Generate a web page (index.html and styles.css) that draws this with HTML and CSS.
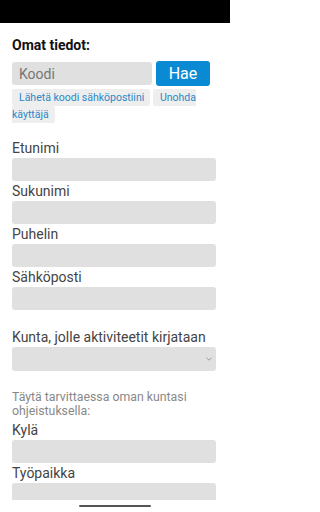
FILE: index.html
```html
<!DOCTYPE html>
<html lang="fi">
<head>
<meta charset="utf-8">
<title>Omat tiedot</title>
<link rel="stylesheet" href="styles.css">
</head>
<body>
<div class="screen">
  <div class="status"></div>
  <main class="content">
    <h1 class="title">Omat tiedot:</h1>
    <div class="code-row">
      <input class="code-input" type="text" placeholder="Koodi">
      <button class="btn-primary" type="button">Hae</button>
    </div>
    <div class="links">
      <span class="chip">Lähetä koodi sähköpostiini</span> <span class="chip">Unohda käyttäjä</span>
    </div>
    <div class="fields">
      <label class="field"><span class="label">Etunimi</span><input class="input" type="text"></label>
      <label class="field"><span class="label">Sukunimi</span><input class="input" type="text"></label>
      <label class="field"><span class="label">Puhelin</span><input class="input" type="text"></label>
      <label class="field"><span class="label">Sähköposti</span><input class="input" type="text"></label>
    </div>
    <label class="field field-select"><span class="label">Kunta, jolle aktiviteetit kirjataan</span>
      <span class="select">
        <svg class="chev" width="6" height="4" viewBox="0 0 6 4"><path d="M0.5 0.8 L3 3.2 L5.5 0.8" fill="none" stroke="#888" stroke-width="0.8"/></svg>
      </span>
    </label>
    <p class="help">Täytä tarvittaessa oman kuntasi ohjeistuksella:</p>
    <label class="field"><span class="label">Kylä</span><input class="input" type="text"></label>
    <label class="field"><span class="label">Työpaikka</span><input class="input" type="text"></label>
  </main>
  <div class="navbar"><span class="home"></span></div>
</div>
</body>
</html>
```

FILE: styles.css
```css
html, body {
  margin: 0;
  padding: 0;
  background: #fff;
}
body {
  font-family: Roboto, "Liberation Sans", sans-serif;
  color: #333;
}
.screen {
  width: 230px;
  height: 512px;
  display: flex;
  flex-direction: column;
  overflow: hidden;
}
.status {
  height: 23px;
  flex: none;
  background: #000;
}
.content {
  flex: 1;
  min-height: 0;
  overflow: hidden;
  padding: 0 14px 0 12px;
}
.title {
  margin: 13px 0 0;
  font-size: 14px;
  line-height: 18px;
  font-weight: 700;
  color: #111;
}
.code-row {
  display: flex;
  align-items: center;
  gap: 4px;
  margin-top: 7px;
}
.code-input {
  width: 140px;
  height: 23px;
  box-sizing: border-box;
  border: none;
  border-radius: 3px;
  background: #e0e0e0;
  padding: 0 7px;
  font-family: inherit;
  font-size: 14px;
  color: #333;
  outline: none;
}
.code-input::placeholder {
  color: #757575;
}
.btn-primary {
  width: 54px;
  height: 25px;
  border: none;
  border-radius: 3px;
  background: #0a8ad2;
  color: #fff;
  font-family: inherit;
  font-size: 16px;
  padding: 0;
}
.links {
  margin-top: 3px;
  font-size: 10.5px;
  line-height: 17px;
  color: #2a88c8;
}
.chip {
  background: #eeeeee;
  padding: 2px 6px 2px 7px;
  border-radius: 2px;
}
.fields {
  margin-top: 15px;
}
.field {
  display: block;
  margin-top: 0;
}
.label {
  display: block;
  font-size: 14px;
  line-height: 20px;
  color: #444;
}
.input {
  display: block;
  width: 204px;
  height: 23px;
  box-sizing: border-box;
  border: none;
  border-radius: 3px;
  background: #e0e0e0;
  outline: none;
}
.field-select {
  margin-top: 17px;
}
.select {
  display: flex;
  align-items: center;
  justify-content: flex-end;
  width: 204px;
  height: 24px;
  box-sizing: border-box;
  padding-right: 4px;
  border-radius: 3px;
  background: #e0e0e0;
}
.help {
  margin: 20px 0 2px;
  font-size: 12.3px;
  line-height: 13.5px;
  color: #888;
}
.navbar {
  height: 12px;
  flex: none;
  background: #fff;
  display: flex;
  justify-content: center;
  align-items: flex-start;
}
.home {
  display: block;
  width: 72px;
  height: 2px;
  margin-top: 5px;
  background: #555;
  border-radius: 1px;
}
```
